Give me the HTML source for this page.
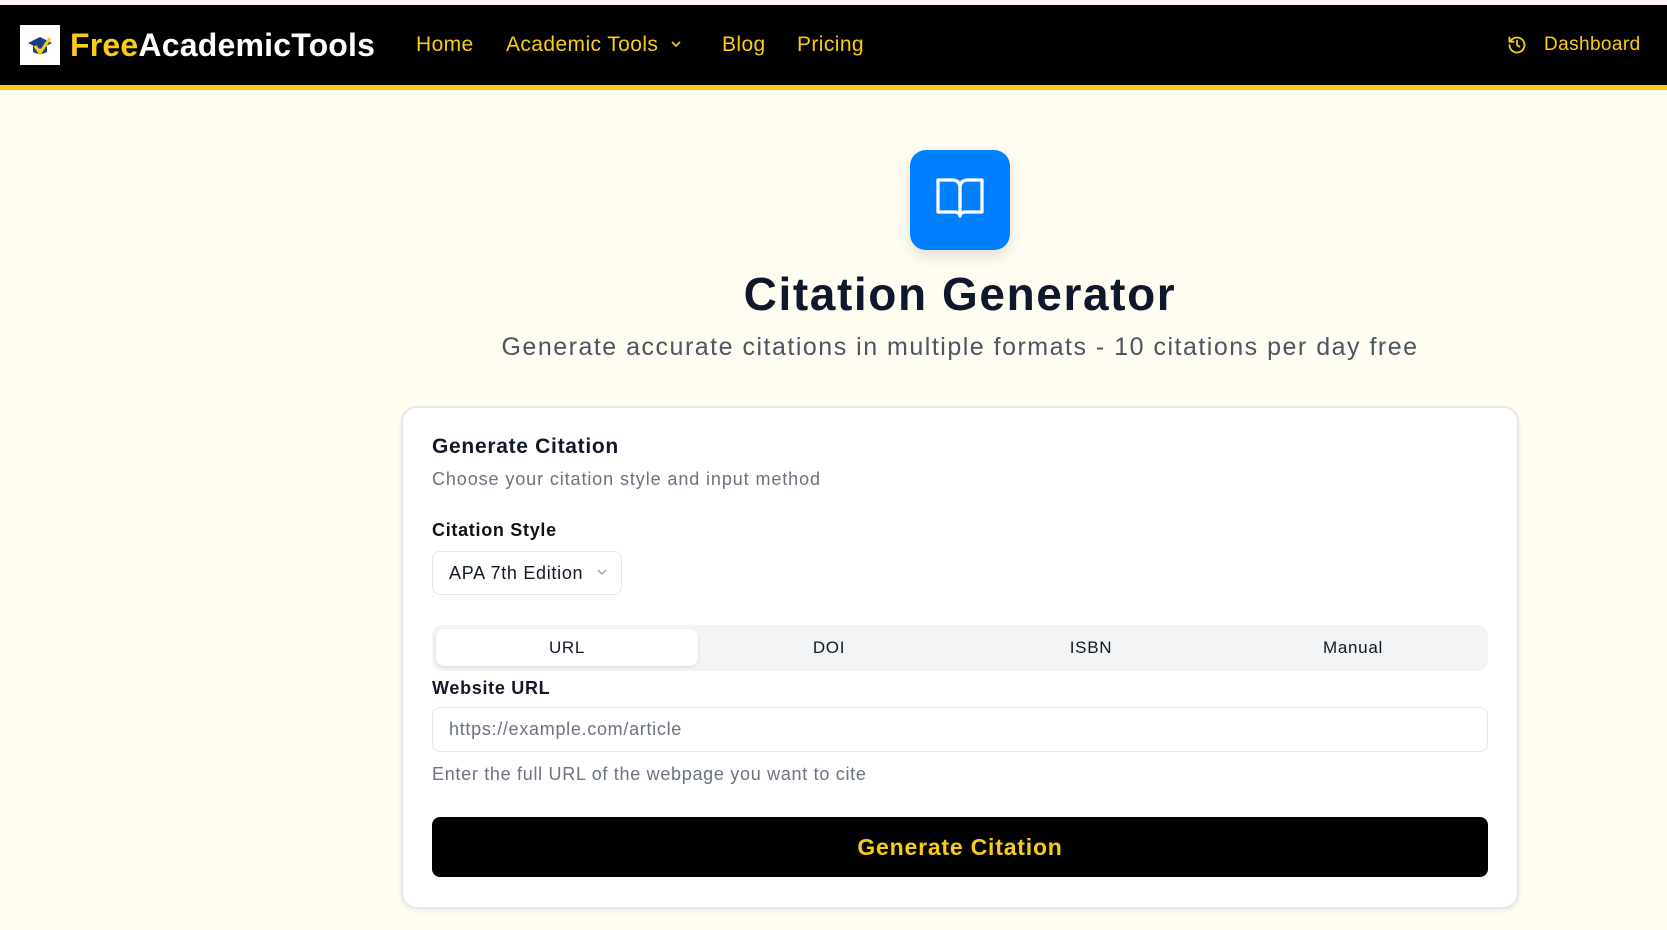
<!DOCTYPE html>
<html><head><meta charset="utf-8"><style>
*{box-sizing:border-box;margin:0;padding:0}
body{width:1667px;height:930px;overflow:hidden;background:#fffdf1;font-family:"Liberation Sans",sans-serif;position:relative;color:#111827}
.top{position:absolute;left:0;top:0;width:1667px;height:5px;background:#fff3f3}
.hdr{position:absolute;left:0;top:5px;width:1667px;height:80px;background:#000}
.ybar{position:absolute;left:0;top:85px;width:1667px;height:5px;background:#facc15}
.logo{position:absolute;left:20px;top:25px;width:40px;height:40px;background:#fff}
.brand{position:absolute;left:70px;top:25px;font-size:32px;font-weight:bold;color:#fff;letter-spacing:0.2px;line-height:40px}
.brand span{color:#facc15}
.nav{position:absolute;top:31px;font-size:21px;color:#facc15;line-height:28px;letter-spacing:0.4px}
.dash{position:absolute;left:1544px;top:32px;font-size:19px;color:#facc15;line-height:26px;letter-spacing:0.4px}
.abs{position:absolute;letter-spacing:0.7px}
.card{position:absolute;left:401px;top:406px;width:1118px;height:503px;background:#fff;border:2px solid #e7e7e7;border-radius:16px;box-shadow:0 2px 6px rgba(0,0,0,.06)}
</style></head><body>
<div class="top"></div>
<div class="hdr"></div><div class="ybar"></div>
<div class="logo"><svg width="40" height="40" viewBox="0 0 40 40"><path d="M8 18 L20 12 L32 18 L20 24 Z" fill="#1e3a8a"/><path d="M13 21 V27 Q20 31 27 27 V21 L20 25 Z" fill="#1e3a8a"/><path d="M15 21 L20 28 L30 13" stroke="#facc15" stroke-width="3" fill="none"/></svg></div>
<div class="brand"><span>Free</span>AcademicTools</div>
<div class="nav" style="left:416px">Home</div>
<div class="nav" style="left:506px">Academic Tools <svg width="14" height="14" viewBox="0 0 14 14" style="margin-left:4px"><path d="M3 5 L7 9 L11 5" stroke="#facc15" stroke-width="1.6" fill="none"/></svg></div>
<div class="nav" style="left:722px">Blog</div>
<div class="nav" style="left:797px">Pricing</div>
<svg class="abs" style="left:1507px;top:35px" width="20" height="20" viewBox="0 0 24 24" fill="none" stroke="#facc15" stroke-width="2.2" stroke-linecap="round"><path d="M3 12a9 9 0 1 0 3-6.7L3 8"/><path d="M3 3v5h5"/><path d="M12 7v5l3 2"/></svg>
<div class="dash">Dashboard</div>

<div class="abs" style="left:910px;top:150px;width:100px;height:100px;background:#0080ff;border-radius:16px;box-shadow:0 6px 14px rgba(0,0,0,.12)"></div>
<svg class="abs" style="left:932px;top:172px" width="56" height="56" viewBox="0 0 56 56" fill="none" stroke="#fff" stroke-width="3.2" stroke-linejoin="round"><path d="M6 8 H20 Q28 8 28 16 V44 Q28 40 22 40 H6 Z"/><path d="M50 8 H36 Q28 8 28 16 V44 Q28 40 34 40 H50 Z"/></svg>
<div class="abs" style="left:0;width:1920px;top:266px;text-align:center;font-size:46px;font-weight:bold;color:#0f172a;line-height:56px;letter-spacing:1.6px">Citation Generator</div>
<div class="abs" style="left:0;width:1920px;top:331px;text-align:center;font-size:25px;color:#4b5563;line-height:32px;letter-spacing:1.5px">Generate accurate citations in multiple formats - 10 citations per day free</div>

<div class="card"></div>
<div class="abs" style="left:432px;top:434px;font-size:21px;font-weight:bold;line-height:26px">Generate Citation</div>
<div class="abs" style="left:432px;top:468px;font-size:18px;color:#6b7280;line-height:22px;letter-spacing:0.9px">Choose your citation style and input method</div>
<div class="abs" style="left:432px;top:519px;font-size:18px;font-weight:bold;color:#111;line-height:22px">Citation Style</div>
<div class="abs" style="left:432px;top:551px;width:190px;height:44px;border:1px solid #e5e7eb;border-radius:8px;font-size:18px;line-height:42px;padding-left:16px">APA 7th Edition <svg width="14" height="14" viewBox="0 0 14 14" style="margin-left:6px"><path d="M3 5 L7 9 L11 5" stroke="#9ca3af" stroke-width="1.5" fill="none"/></svg></div>
<div class="abs" style="left:432px;top:625px;width:1056px;height:46px;background:#f3f4f6;border-radius:10px"></div>
<div class="abs" style="left:436px;top:629px;width:262px;height:37px;background:#fff;border-radius:8px;box-shadow:0 1px 3px rgba(0,0,0,.12)"></div>
<div class="abs" style="left:436px;top:629px;width:262px;line-height:37px;text-align:center;font-size:17px">URL</div>
<div class="abs" style="left:698px;top:629px;width:262px;line-height:37px;text-align:center;font-size:17px">DOI</div>
<div class="abs" style="left:960px;top:629px;width:262px;line-height:37px;text-align:center;font-size:17px">ISBN</div>
<div class="abs" style="left:1222px;top:629px;width:262px;line-height:37px;text-align:center;font-size:17px">Manual</div>
<div class="abs" style="left:432px;top:677px;font-size:18px;font-weight:bold;line-height:22px">Website URL</div>
<div class="abs" style="left:432px;top:707px;width:1056px;height:45px;border:1px solid #e5e7eb;border-radius:8px;font-size:18px;line-height:43px;padding-left:16px;color:#6b7280">https://example.com/article</div>
<div class="abs" style="left:432px;top:763px;font-size:18px;color:#6b7280;line-height:22px">Enter the full URL of the webpage you want to cite</div>
<div class="abs" style="left:432px;top:817px;width:1056px;height:60px;background:#000;border-radius:8px;color:#facc15;font-size:23px;font-weight:bold;text-align:center;line-height:60px;letter-spacing:0.8px">Generate Citation</div>
</body></html>
